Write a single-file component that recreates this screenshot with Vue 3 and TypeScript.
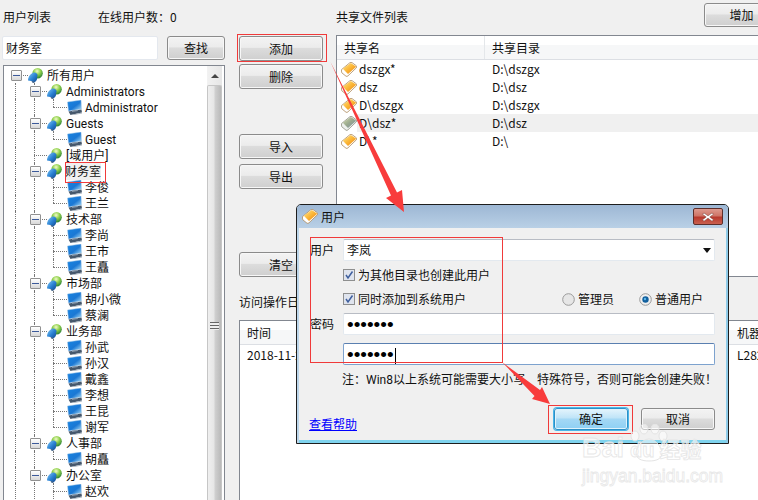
<script setup lang="ts">
interface TreeRow { label: string; level: 0 | 1 | 2; kind: 'group' | 'user'; leaf?: boolean; last?: boolean; selected?: boolean }
const r = (label: string, level: 0 | 1 | 2, kind: 'group' | 'user', extra: Partial<TreeRow> = {}): TreeRow => ({ label, level, kind, ...extra })
const rows: TreeRow[] = [
  r('所有用户', 0, 'group'),
  r('Administrators', 1, 'group'),
  r('Administrator', 2, 'user', { last: true }),
  r('Guests', 1, 'group'),
  r('Guest', 2, 'user', { last: true }),
  r('[域用户]', 1, 'group', { leaf: true }),
  r('财务室', 1, 'group', { selected: true }),
  r('李俊', 2, 'user'),
  r('王兰', 2, 'user', { last: true }),
  r('技术部', 1, 'group'),
  r('李尚', 2, 'user'),
  r('王市', 2, 'user'),
  r('王矗', 2, 'user', { last: true }),
  r('市场部', 1, 'group'),
  r('胡小微', 2, 'user'),
  r('蔡澜', 2, 'user', { last: true }),
  r('业务部', 1, 'group'),
  r('孙武', 2, 'user'),
  r('孙汉', 2, 'user'),
  r('戴鑫', 2, 'user'),
  r('李想', 2, 'user'),
  r('王昆', 2, 'user'),
  r('谢军', 2, 'user', { last: true }),
  r('人事部', 1, 'group'),
  r('胡矗', 2, 'user', { last: true }),
  r('办公室', 1, 'group'),
  r('赵欢', 2, 'user'),
]
const shares = [
  { name: 'dszgx*', dir: 'D:\\dszgx', hot: false },
  { name: 'dsz', dir: 'D:\\dsz', hot: false },
  { name: 'D\\dszgx', dir: 'D:\\dszgx', hot: false },
  { name: 'D\\dsz*', dir: 'D:\\dsz', hot: true },
  { name: 'D\\*', dir: 'D:\\', hot: false },
]
</script>

<template>
  <div class="app">
    <svg class="defs" width="0" height="0" aria-hidden="true">
      <defs>
        <radialGradient id="gGlobe" cx="0.45" cy="0.3" r="0.75">
          <stop offset="0" stop-color="#f0fbc8" />
          <stop offset="0.45" stop-color="#8fd04a" />
          <stop offset="1" stop-color="#1c7438" />
        </radialGradient>
        <linearGradient id="gBody" x1="0" y1="0" x2="1" y2="1">
          <stop offset="0" stop-color="#8accf5" />
          <stop offset="0.5" stop-color="#2a82d4" />
          <stop offset="1" stop-color="#0e4088" />
        </linearGradient>
        <linearGradient id="gScreen" x1="0" y1="0" x2="1" y2="1">
          <stop offset="0" stop-color="#1785e4" />
          <stop offset="0.55" stop-color="#1b78d4" />
          <stop offset="1" stop-color="#b4e4fa" />
        </linearGradient>
        <linearGradient id="gFolder" x1="0" y1="0" x2="1" y2="1">
          <stop offset="0" stop-color="#ffe98f" />
          <stop offset="0.5" stop-color="#fbb636" />
          <stop offset="1" stop-color="#ea7f10" />
        </linearGradient>
        <linearGradient id="gFolderDim" x1="0" y1="0" x2="1" y2="1">
          <stop offset="0" stop-color="#d8dfae" />
          <stop offset="0.5" stop-color="#9aa98e" />
          <stop offset="1" stop-color="#7f90a8" />
        </linearGradient>
        <symbol id="iGroup" viewBox="0 0 15 15">
          <circle cx="9.6" cy="5.2" r="5.2" fill="url(#gGlobe)" />
          <path d="M6 4.5 C9 4.500 10.500 7 9 9 C9.500 11 8.500 13 7 14 L5 15 L3.500 13 L0 12.500 C0 8.500 3 5 6 4.500 Z" fill="url(#gBody)" />
          <path d="M3.500 13 L7 14 L5 15 Z" fill="#56677c" />
        </symbol>
        <symbol id="iUser" viewBox="0 0 15 15">
          <path d="M0.5 2 L14 0 L14.5 9 L1.5 11 Z" fill="url(#gScreen)" stroke="#a8cbe6" stroke-width="0.5" />
          <path d="M1.5 11.5 L14.5 9.5 L15 12.5 L3.5 15 Z" fill="#46586c" />
          <path d="M5 10.5 L10.5 9.8 L11 11 L5 12 Z" fill="#8798aa" />
          <path d="M3.5 15 L15 12.5 L15 13.5 L4.5 15.5 Z" fill="#aab5c0" />
        </symbol>
        <symbol id="iFolder" viewBox="0 0 16 15">
          <path d="M0.6 7.500 L9 0.600 Q10 0 11 0.600 L15.600 4 Q16 5 15.400 5.800 L7 13.800 Q6 14.800 5 14.200 L0.800 10.800 Q0.200 9 0.600 7.500 Z" fill="#fff" stroke="#ad8a5c" stroke-width="0.8" />
          <path d="M1.800 6.800 L9.800 0.900 L15.300 4.800 L7 12 Z" fill="url(#gFolder)" />
        </symbol>
        <symbol id="iFolderDim" viewBox="0 0 16 15">
          <path d="M0.6 7.500 L9 0.600 Q10 0 11 0.600 L15.600 4 Q16 5 15.400 5.800 L7 13.800 Q6 14.800 5 14.200 L0.800 10.800 Q0.200 9 0.600 7.500 Z" fill="#eef1ee" stroke="#8f8f80" stroke-width="0.8" />
          <path d="M1.800 6.800 L9.800 0.900 L15.300 4.800 L7 12 Z" fill="url(#gFolderDim)" />
        </symbol>
      </defs>
    </svg>

    <aside class="left">
      <div class="head">
        <span>用户列表</span>
        <span class="online">在线用户数：0</span>
      </div>
      <div class="search">
        <div class="input search-input">财务室</div>
        <button class="btn find">查找</button>
      </div>
      <div class="tree">
        <div class="tree-list">
          <div v-for="(row, i) in rows" :key="i" class="row" :class="'lv' + row.level">
            <i v-if="row.level > 0" class="guide g0"></i>
            <i v-if="row.level > 0" class="guide g1"></i>
            <i v-if="row.level === 2" class="guide g2" :class="{ end: row.last }"></i>
            <template v-if="row.level < 2">
              <span v-if="!row.leaf" class="expander"></span>
              <span class="dash" :class="{ long: row.leaf }"></span>
            </template>
            <span v-else class="dash deep"></span>
            <svg class="ti" width="15" height="15"><use :href="row.kind === 'group' ? '#iGroup' : '#iUser'" /></svg>
            <span class="tl" :class="{ sel: row.selected }">{{ row.label }}</span>
          </div>
        </div>
        <div class="scroll">
          <div class="sb-up"><span class="tri"></span></div>
          <div class="sb-thumb"><span class="grip"></span></div>
        </div>
      </div>
    </aside>

    <main class="main">
      <section class="top">
        <div class="actions">
          <button class="btn act">添加</button>
          <button class="btn act m4">删除</button>
          <button class="btn act m46">导入</button>
          <button class="btn act m6">导出</button>
          <button class="btn act clear">清空</button>
        </div>
        <div class="share">
          <div class="share-head">
            <span>共享文件列表</span>
            <button class="btn grow">增加</button>
          </div>
          <div class="list">
            <div class="list-head">
              <span class="c1">共享名</span>
              <span class="c2">共享目录</span>
            </div>
            <div v-for="s in shares" :key="s.name" class="share-row">
              <svg class="fi" width="16" height="15"><use :href="s.hot ? '#iFolderDim' : '#iFolder'" /></svg>
              <div class="share-cells" :class="{ hot: s.hot }">
                <span class="c1b">{{ s.name }}</span>
                <span>{{ s.dir }}</span>
              </div>
            </div>
          </div>
        </div>
      </section>
      <div class="log-title">访问操作日志</div>
      <section class="log">
        <div class="log-head">
          <span class="lc1">时间</span>
          <span>机器</span>
        </div>
        <div class="log-row">
          <span class="lc1">2018-11-26 10:21:08</span>
          <span>L28201</span>
        </div>
      </section>
    </main>

    <div class="dialog">
      <div class="titlebar">
        <svg width="16" height="15"><use href="#iFolder" /></svg>
        <span class="dt">用户</span>
        <span class="close">
          <svg width="12" height="10" viewBox="0 0 12 10"><path d="M2 1 L6 3.800 L10 1 L11.500 2.200 L7.800 5 L11.500 7.800 L10 9.200 L6 6.200 L2 9.200 L0.500 7.800 L4.200 5 L0.500 2.200 Z" fill="#fff" stroke="#6e3a34" stroke-width="0.5" /></svg>
        </span>
      </div>
      <div class="dbody">
        <div class="frow">
          <label class="fl">用户</label>
          <div class="input field combo">
            <span>李岚</span>
            <span class="caret"></span>
          </div>
        </div>
        <div class="check c-first">
          <svg width="12" height="12" viewBox="0 0 12 12"><rect x="0.500" y="0.500" width="11" height="11" fill="#dfe4ee" stroke="#8e8f8f" /><path d="M3 6 L5 9 L9.500 2.500" fill="none" stroke="#3f5f9e" stroke-width="1.500" /></svg>
          <span>为其他目录也创建此用户</span>
        </div>
        <div class="check">
          <svg width="12" height="12" viewBox="0 0 12 12"><rect x="0.500" y="0.500" width="11" height="11" fill="#dfe4ee" stroke="#8e8f8f" /><path d="M3 6 L5 9 L9.500 2.500" fill="none" stroke="#3f5f9e" stroke-width="1.500" /></svg>
          <span>同时添加到系统用户</span>
          <span class="radio r1">
            <svg width="13" height="13" viewBox="0 0 13 13"><circle cx="6.500" cy="6.500" r="5.800" fill="#e6e6e6" stroke="#9a9a9a" /></svg>
            管理员
          </span>
          <span class="radio r2">
            <svg width="13" height="13" viewBox="0 0 13 13"><circle cx="6.500" cy="6.500" r="5.800" fill="#f0f0f0" stroke="#9a9a9a" /><circle cx="6.500" cy="6.500" r="3.200" fill="#12609e" /><circle cx="6" cy="6" r="1.200" fill="#5cb8ea" /></svg>
            普通用户
          </span>
        </div>
        <div class="frow pw">
          <label class="fl">密码</label>
          <div class="input field dots">•••••••</div>
        </div>
        <div class="frow pw2">
          <span class="fl"></span>
          <div class="input field dots focus">•••••••<i class="cursor"></i></div>
        </div>
        <div class="note">注：Win8以上系统可能需要大小写、特殊符号，否则可能会创建失败！</div>
        <div class="foot">
          <a class="help">查看帮助</a>
          <button class="btn dbtn primary">确定</button>
          <button class="btn dbtn">取消</button>
        </div>
      </div>
    </div>

    <svg class="marks" width="758" height="500" viewBox="0 0 758 500" aria-hidden="true">
      <g fill="none" stroke="#f03a3a" stroke-width="1">
        <rect x="237.500" y="34.500" width="89" height="27" />
        <rect x="65.500" y="162.500" width="40" height="20" />
        <rect x="310.500" y="237.500" width="192" height="125" />
        <rect x="548.500" y="405.500" width="84" height="28" />
      </g>
      <g fill="#f83c3c">
        <path d="M330.500 62 L397 192.500 L402 190 L404 212 L386 198 L391 195.500 Z" />
        <path d="M502 362 L540 390 L542 387 L550 404 L532 399 L534.500 396 Z" />
      </g>
    </svg>

    <div class="mark">
      <svg class="paw" width="40" height="40" viewBox="0 0 40 40">
        <g fill="#fff" fill-opacity="0.5" stroke="#e4e4e4">
          <ellipse cx="6" cy="12" rx="4" ry="5" />
          <ellipse cx="15" cy="5" rx="4" ry="5" />
          <ellipse cx="26" cy="5" rx="4" ry="5" />
          <ellipse cx="34" cy="12" rx="4" ry="5" />
          <path d="M20 15 C26 15 33 23 33 29 C33 35 27 37 20 37 C13 37 7 35 7 29 C7 23 14 15 20 15 Z" />
        </g>
      </svg>
      <div class="mark-top"><span>Bai</span><span class="du">du</span><span class="jy">经验</span></div>
      <div class="mark-url">jingyan.baidu.com</div>
    </div>
  </div>
</template>

<style>
html, body { margin: 0; background: #f0f0f0; }
</style>

<style scoped>
.app {
  position: relative;
  display: flex;
  width: 758px;
  height: 500px;
  overflow: hidden;
  background: #f0f0f0;
  color: #111;
  font: 12px/16px "Noto Sans CJK SC", "Noto Sans", sans-serif;
}
.defs { display: block; position: absolute; }
button { font: inherit; color: inherit; padding: 0; cursor: default; }

.btn {
  display: block;
  border: 1px solid #8b8b8b;
  border-radius: 3px;
  background: linear-gradient(#f3f3f3 0, #ececec 45%, #dcdcdc 50%, #cfcfcf 100%);
  box-shadow: inset 0 0 0 1px #f7f7f7;
}
.input {
  box-sizing: border-box;
  background: #fff;
  border: 1px solid #e3e9ef;
  border-top-color: #b8bcc4;
  border-radius: 2px;
}

.left { width: 239px; flex: none; padding-left: 2px; box-sizing: border-box; }
.head { height: 36px; padding: 9px 0 0 1px; box-sizing: border-box; display: flex; }
.online { margin-left: 47px; }
.search { display: flex; height: 24px; }
.search-input { width: 156px; height: 24px; padding: 3px 3px; border-color: #e4e8ee; }
.find { width: 58px; height: 24px; margin-left: 9px; }
.tree {
  display: flex;
  width: 222px;
  height: 440px;
  margin: 5px 0 0 1px;
  box-sizing: border-box;
  background: #fff;
  border: 1px solid #828790;
}
.tree-list { width: 203px; padding-top: 1px; overflow: hidden; flex: none; font-family: Roboto, "Noto Sans CJK SC", sans-serif; }
.row { position: relative; display: flex; align-items: center; height: 16px; white-space: nowrap; }
.lv0 { padding-left: 7px; }
.lv1 { padding-left: 26px; }
.lv2 { padding-left: 49px; }
.guide { position: absolute; top: 0; bottom: 0; width: 0; border-left: 1px dotted #777; }
.g0 { left: 11px; }
.g1 { left: 30px; }
.g2 { left: 49px; }
.g2.end { bottom: 8px; }
.expander {
  position: relative;
  z-index: 1;
  width: 9px;
  height: 9px;
  flex: none;
  border: 1px solid #919191;
  border-radius: 1px;
  background: linear-gradient(#fff, #d8d8d8);
  margin-right: -1px;
}
.expander::after {
  content: "";
  position: absolute;
  left: 1px;
  right: 1px;
  top: 4px;
  height: 1px;
  background: #3c5a9a;
}
.dash { width: 7px; flex: none; border-top: 1px dotted #777; }
.dash.long { width: 13px; margin-left: 4px; }
.dash.deep { width: 14px; }
.ti { flex: none; }
.tl { margin-left: 4px; padding-top: 2px; }
.lv2 .tl { margin-left: 3px; }
.sel { background: #f0f0f0; margin-left: 3px; }
.scroll { width: 15px; flex: none; background: #f0f0f0; display: flex; flex-direction: column; }
.sb-up {
  height: 19px;
  flex: none;
  display: flex;
  align-items: center;
  justify-content: center;
  background: linear-gradient(90deg, #f2f2f2, #e6e6e6);
}
.tri { width: 0; height: 0; border: 4px solid transparent; border-top: 0; border-bottom: 4px solid #444; }
.sb-thumb {
  flex: 1;
  position: relative;
  border: 1px solid #c6c6c6;
  border-radius: 2px 2px 0 0;
  border-bottom: 0;
  background: linear-gradient(90deg, #efefef 0, #e6e6e6 45%, #cfcfcf 55%, #b9b9b9 100%);
}
.grip {
  position: absolute;
  left: 2px;
  right: 2px;
  top: 236px;
  height: 8px;
  background: repeating-linear-gradient(#666 0 1px, #eee 1px 3px);
}

.main { width: 540px; flex: none; display: flex; flex-direction: column; }
.top { display: flex; height: 277px; }
.actions { width: 97px; flex: none; padding-top: 36px; box-sizing: border-box; display: flex; flex-direction: column; }
.act { width: 84px; height: 25px; flex: none; }
.m4 { margin-top: 3px; }
.m46 { margin-top: 45px; }
.m6 { margin-top: 5px; }
.clear { margin-top: auto; }
.share { flex: 1; }
.share-head { height: 35px; display: flex; justify-content: space-between; padding-top: 9px; box-sizing: border-box; position: relative; }
.grow { position: absolute; right: 0; top: 3px; width: 75px; height: 24px; }
.list { height: 242px; box-sizing: border-box; background: #fff; border: 1px solid #828790; border-right: 0; }
.list-head {
  display: flex;
  height: 24px;
  box-sizing: border-box;
  line-height: 24px;
  border-bottom: 1px solid #dcdfe4;
  background: linear-gradient(#fff 0 40%, #f6f7f8 40% 100%);
}
.c1 { width: 148px; padding-left: 7px; box-sizing: border-box; border-right: 1px solid #e4e7ea; }
.c2 { padding-left: 7px; }
.share-row { display: flex; align-items: center; height: 18px; padding-left: 4px; }
.fi { flex: none; }
.share-cells { flex: 1; display: flex; height: 18px; line-height: 18px; padding-left: 2px; }
.hot { background: #f0f0f0; }
.c1b { width: 133px; flex: none; }
.log-title { height: 43px; padding-top: 17px; box-sizing: border-box; }
.log { flex: 1; background: #fff; border: 1px solid #828790; border-right: 0; border-bottom: 0; }
.log-head {
  display: flex;
  height: 24px;
  line-height: 24px;
  padding-left: 7px;
  border-bottom: 1px solid #dcdfe4;
  box-sizing: border-box;
  background: linear-gradient(#fff 0 40%, #f6f7f8 40% 100%);
}
.log-row { display: flex; height: 20px; line-height: 20px; padding-left: 7px; }
.lc1 { width: 490px; flex: none; }

.dialog {
  position: absolute;
  left: 296px;
  top: 204px;
  width: 433px;
  height: 240px;
  box-sizing: border-box;
  border: 1px solid #1d1d1d;
  border-radius: 5px 5px 0 0;
  background: #f0f0f0;
  box-shadow: inset 2px 0 #bcd6ea, inset -2px 0 #8fcbe8, inset 0 -3px #7fd3ee;
  overflow: hidden;
}
.titlebar {
  position: relative;
  height: 23px;
  display: flex;
  align-items: center;
  padding-left: 5px;
  background: linear-gradient(#9db7d4, #b9d0e6);
}
.dt { margin-left: 3px; }
.close {
  position: absolute;
  right: 5px;
  top: 3px;
  width: 30px;
  height: 17px;
  box-sizing: border-box;
  border: 1px solid #5d2e2a;
  border-radius: 2px;
  background: linear-gradient(#dd9a8e 0, #cf7567 45%, #b8392d 55%, #c9604f 100%);
  display: flex;
  align-items: center;
  justify-content: center;
}
.dbody { padding: 11px 13px 0 13px; }
.frow { display: flex; align-items: center; }
.fl { width: 33px; flex: none; }
.field { width: 372px; height: 22px; padding: 2px 3px; line-height: 16px; }
.combo { display: flex; justify-content: space-between; align-items: center; }
.caret { width: 0; height: 0; border: 4px solid transparent; border-bottom: 0; border-top: 5px solid #111; }
.check { display: flex; align-items: center; height: 24px; padding-left: 33px; position: relative; }
.check > span:first-of-type { margin-left: 3px; }
.c-first { margin-top: 2px; }
.radio { display: inline-flex; align-items: center; gap: 3px; position: absolute; top: 4px; }
.r1 { left: 252px; }
.r2 { left: 329px; }
.pw { margin-top: 2px; }
.pw2 { margin-top: 8px; }
.dots {
  font: 19px/17px "Liberation Sans", sans-serif;
  color: #000;
  white-space: nowrap;
}
.focus { border-color: #7da2ce; border-top-color: #5a7fb0; }
.cursor { display: inline-block; width: 1px; height: 16px; background: #000; vertical-align: -3px; margin-left: 1px; }
.note { height: 30px; line-height: 30px; padding-left: 32px; white-space: nowrap; font-family: Roboto, "Noto Sans CJK SC", sans-serif; }
.foot { display: flex; align-items: flex-start; margin-top: 13px; }
.help { color: #0000ff; text-decoration: underline; margin-top: 8px; margin-right: auto; margin-left: -1px; }
.dbtn { width: 74px; height: 22px; line-height: 18px; margin-left: 13px; }
.primary {
  border: 1px solid #2a90c8;
  margin-left: 0;
  background: linear-gradient(#e4f4fc 0, #bfe4f8 45%, #a4d8f5 50%, #8ed0f4 100%);
  box-shadow: 0 0 0 1px #4ab4e8, inset 0 0 0 1px #dff3fc;
}

.marks { position: absolute; left: 0; top: 0; pointer-events: none; }
.mark { position: absolute; left: 582px; top: 424px; width: 140px; height: 62px; pointer-events: none; }
.paw { position: absolute; left: 47px; top: 0; }
.mark-top {
  position: absolute;
  left: 0;
  top: 9px;
  display: flex;
  font: 700 27px/30px "Liberation Sans", sans-serif;
  color: rgba(255, 255, 255, .6);
  -webkit-text-stroke: 0.8px #e6e6e6;
}
.du { font-size: 20px; margin-left: 6px; margin-top: 2px; }
.jy { font: 700 21px/30px "Noto Sans CJK SC", sans-serif; margin-left: 5px; }
.mark-url {
  position: absolute;
  left: 0;
  top: 42px;
  font: 400 17.5px/20px "Liberation Sans", sans-serif;
  color: rgba(255, 255, 255, .6);
  -webkit-text-stroke: 0.8px #e8e8e8;
  white-space: nowrap;
}
</style>
